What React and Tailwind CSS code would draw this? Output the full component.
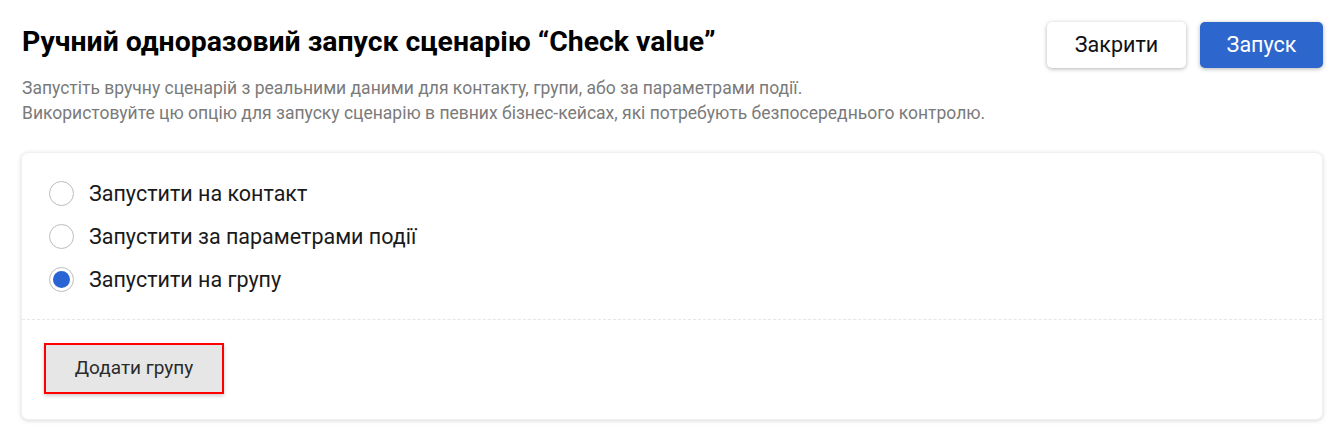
import React from "react";

function Radio({ checked, label }) {
  return (
    <label className="flex items-center h-[43px]">
      <span className="w-[25px] h-[25px] rounded-full border border-[#bdbdbd] flex items-center justify-center shrink-0 bg-white">
        {checked && <span className="w-[17px] h-[17px] rounded-full bg-[#2a64d4]" />}
      </span>
      <span className="ml-[15px] text-[21.5px] text-[#1a1a1a] leading-none">{label}</span>
    </label>
  );
}

export default function App() {
  return (
    <div
      className="w-[1341px] h-[441px] bg-white pl-[21px] pr-[18px] pt-[21px]"
      style={{ fontFamily: "Roboto, 'Noto Sans', sans-serif" }}
    >
      <div className="flex justify-between items-start">
        <div className="pl-[1px]">
          <h1 className="text-[28.4px] font-bold text-black leading-[34px] mt-[4px]">
            Ручний одноразовий запуск сценарію “Check value”
          </h1>
          <p className="mt-[17px] text-[17.5px] leading-[25px] text-[#7a7a7a]">
            Запустіть вручну сценарій з реальними даними для контакту, групи, або за параметрами події.
            <br />
            Використовуйте цю опцію для запуску сценарію в певних бізнес-кейсах, які потребують безпосереднього контролю.
          </p>
        </div>
        <div className="flex gap-[14px] pt-[1px]">
          <button className="w-[139px] h-[46px] rounded-[5px] bg-white text-[21.5px] text-[#111] shadow-[0_1px_4px_rgba(0,0,0,0.3)]">
            Закрити
          </button>
          <button className="w-[123px] h-[46px] rounded-[5px] bg-[#2d66cc] text-[21.5px] text-white shadow-[0_1px_4px_rgba(0,0,0,0.3)]">
            Запуск
          </button>
        </div>
      </div>

      <div className="mt-[26px] rounded-[7px] bg-white shadow-[0_1px_4px_rgba(0,0,0,0.15)] border border-[#f0f0f0]">
        <div className="pl-[27px] pt-[19px] pb-[18px]">
          <Radio label="Запустити на контакт" />
          <Radio label="Запустити за параметрами події" />
          <Radio checked label="Запустити на групу" />
        </div>
        <div className="border-t border-dashed border-[#e6e6e6]" />
        <div className="pl-[22px] pt-[23px] pb-[25px]">
          <button className="w-[180px] h-[51px] border-[2px] border-[#ff0000] bg-[#e6e6e6] text-[19px] text-[#2b2b2b] shadow-[0_2px_4px_rgba(0,0,0,0.2)]">
            Додати групу
          </button>
        </div>
      </div>
    </div>
  );
}
